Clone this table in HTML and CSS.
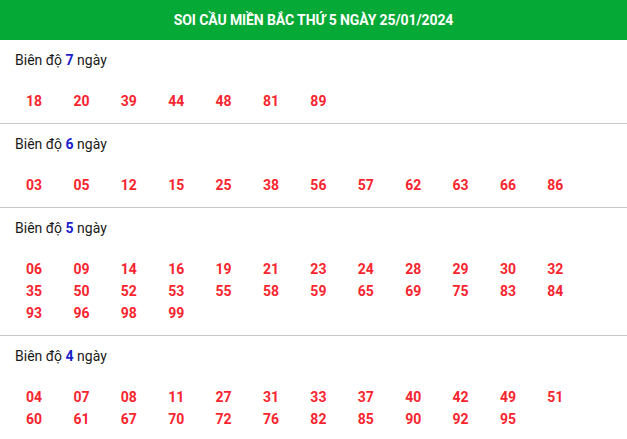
FILE: index.html
```html
<!DOCTYPE html>
<html lang="vi">
<head>
<meta charset="utf-8">
<title>Soi cầu miền Bắc</title>
<link rel="stylesheet" href="styles.css">
</head>
<body>
<div class="box">
  <h2 class="title">SOI CẦU MIỀN BẮC THỨ 5 NGÀY 25/01/2024</h2>
  <div class="section">
    <div class="label">Biên độ <b>7</b> ngày</div>
    <div class="nums">
      <span>18</span><span>20</span><span>39</span><span>44</span><span>48</span><span>81</span><span>89</span>
    </div>
  </div>
  <div class="section">
    <div class="label">Biên độ <b>6</b> ngày</div>
    <div class="nums">
      <span>03</span><span>05</span><span>12</span><span>15</span><span>25</span><span>38</span><span>56</span><span>57</span><span>62</span><span>63</span><span>66</span><span>86</span>
    </div>
  </div>
  <div class="section">
    <div class="label">Biên độ <b>5</b> ngày</div>
    <div class="nums">
      <span>06</span><span>09</span><span>14</span><span>16</span><span>19</span><span>21</span><span>23</span><span>24</span><span>28</span><span>29</span><span>30</span><span>32</span>
      <span>35</span><span>50</span><span>52</span><span>53</span><span>55</span><span>58</span><span>59</span><span>65</span><span>69</span><span>75</span><span>83</span><span>84</span>
      <span>93</span><span>96</span><span>98</span><span>99</span>
    </div>
  </div>
  <div class="section">
    <div class="label">Biên độ <b>4</b> ngày</div>
    <div class="nums">
      <span>04</span><span>07</span><span>08</span><span>11</span><span>27</span><span>31</span><span>33</span><span>37</span><span>40</span><span>42</span><span>49</span><span>51</span>
      <span>60</span><span>61</span><span>67</span><span>70</span><span>72</span><span>76</span><span>82</span><span>85</span><span>90</span><span>92</span><span>95</span>
    </div>
  </div>
</div>
</body>
</html>
```
FILE: styles.css
```css
* { box-sizing: border-box; }
body {
  margin: 0;
  background: #fff;
  font-family: Roboto, "Liberation Sans", Arial, sans-serif;
  color: #222;
}
.title {
  margin: 0;
  height: 40px;
  background: #05a935;
  color: #fff;
  font-size: 14px;
  font-weight: 700;
  line-height: 40px;
  text-align: center;
  letter-spacing: -0.1px;
}
.section {
  padding: 10px 0 11px;
  border-bottom: 1px solid #c8c8c8;
}
.label {
  padding-left: 15px;
  font-size: 14px;
  line-height: 20px;
  color: #1a1a1a;
}
.label b {
  color: #1a22cc;
  font-weight: 700;
}
.nums {
  margin-top: 20px;
  padding-left: 26px;
  display: grid;
  grid-template-columns: repeat(12, 47.4px);
}
.nums span {
  font-size: 14px;
  font-weight: 700;
  line-height: 22px;
  color: #f8252f;
}
```
